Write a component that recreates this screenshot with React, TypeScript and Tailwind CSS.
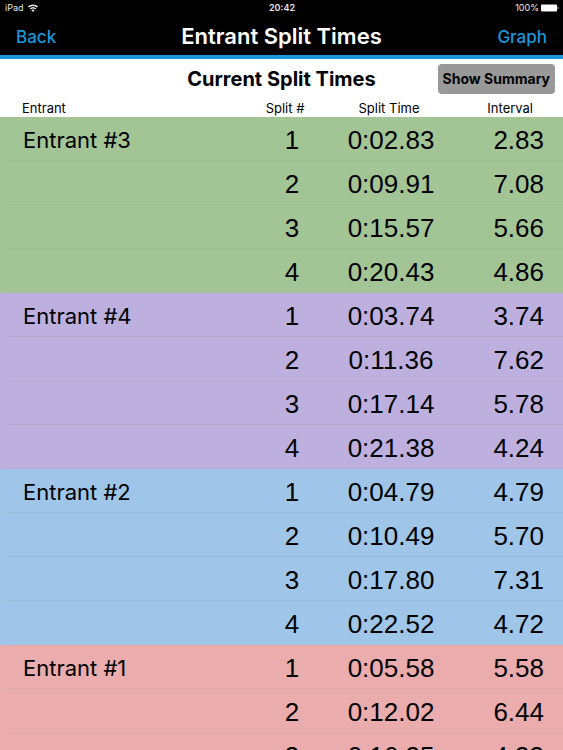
const groups = [
  {
    name: 'Entrant #3',
    color: 'bg-[#a3c495]',
    splits: [
      ['0:02.83', '2.83'],
      ['0:09.91', '7.08'],
      ['0:15.57', '5.66'],
      ['0:20.43', '4.86'],
    ],
  },
  {
    name: 'Entrant #4',
    color: 'bg-[#bdb0df]',
    splits: [
      ['0:03.74', '3.74'],
      ['0:11.36', '7.62'],
      ['0:17.14', '5.78'],
      ['0:21.38', '4.24'],
    ],
  },
  {
    name: 'Entrant #2',
    color: 'bg-[#9fc5e8]',
    splits: [
      ['0:04.79', '4.79'],
      ['0:10.49', '5.70'],
      ['0:17.80', '7.31'],
      ['0:22.52', '4.72'],
    ],
  },
  {
    name: 'Entrant #1',
    color: 'bg-[#eaacac]',
    splits: [
      ['0:05.58', '5.58'],
      ['0:12.02', '6.44'],
      ['0:16.35', '4.33'],
    ],
  },
];

const StatusBar = () => (
  <div className="grid grid-cols-3 items-center h-4 pl-[5px] pr-1 text-[9px] leading-4 text-gray-200">
    <div className="flex items-center gap-1">
      <span>iPad</span>
      <svg className="w-[10px] h-2" viewBox="0 0 20 16" fill="none">
        <path d="M1 6a13 13 0 0 1 18 0" stroke="currentColor" strokeWidth="3.2" />
        <path d="M4.5 10a8 8 0 0 1 11 0" stroke="currentColor" strokeWidth="3" />
        <path d="M10 16l-3.2-3.6a5 5 0 0 1 6.4 0z" fill="currentColor" />
      </svg>
    </div>
    <span className="text-center font-semibold">20:42</span>
    <div className="flex items-center justify-end gap-[2px]">
      <span>100%</span>
      <svg className="w-[18px] h-2" viewBox="0 0 18 8" fill="white">
        <rect x="0" y="0.5" width="16" height="7" rx="1" />
        <path d="M16.6 2.6c1 .2 1.2 2.6 0 2.8z" />
      </svg>
    </div>
  </div>
);

const App = () => {
  return (
    <div className="flex flex-col h-screen overflow-hidden bg-white text-black font-['Inter','Liberation_Sans',sans-serif]">
      <header className="bg-black border-b-4 border-[#1b96dc]">
        <StatusBar />
        <div className="grid grid-cols-[1fr_auto_1fr] items-center h-[39px] px-4">
          <button className="justify-self-start pt-1 text-[17px] font-medium text-[#1b96dc]">
            Back
          </button>
          <h1 className="text-[22px] leading-9 font-semibold text-white">
            Entrant Split Times
          </h1>
          <button className="justify-self-end pt-1 text-[17px] font-medium text-[#1b96dc]">
            Graph
          </button>
        </div>
      </header>

      <div className="grid grid-cols-[1fr_auto_1fr] items-center h-10 px-2">
        <h2 className="col-start-2 text-xl font-bold">Current Split Times</h2>
        <button className="justify-self-end h-[30px] px-[5px] rounded-sm bg-[#999999] text-sm font-bold whitespace-nowrap">
          Show Summary
        </button>
      </div>

      <div className="flex-1 overflow-hidden">
        <table className="w-full table-fixed border-separate border-spacing-0">
          <thead>
            <tr className="h-[18px] text-[13px] leading-[18px]">
              <th className="p-0 pl-[22px] text-left font-normal">Entrant</th>
              <th className="w-[74px] p-0 pr-[14px] font-normal">Split #</th>
              <th className="w-[124px] p-0 pr-1 font-normal">Split Time</th>
              <th className="w-[110px] p-0 pr-[30px] text-right font-normal">
                Interval
              </th>
            </tr>
          </thead>
          {groups.map((group) => (
            <tbody key={group.name} className={group.color}>
              {group.splits.map(([time, interval], i) => (
                <tr
                  key={time}
                  className="text-[26px] leading-[40px] font-['Liberation_Sans',Arial,sans-serif]"
                >
                  <th className="p-0 text-left font-normal">
                    <div className="h-11 ml-[7px] pt-[3px] pl-4 border-b border-[#999999]/20 text-[22px] font-['Inter',sans-serif]">
                      {i === 0 && group.name}
                    </div>
                  </th>
                  <td className="p-0 pt-[3px] border-b border-[#999999]/20 text-center">
                    {i + 1}
                  </td>
                  <td className="p-0 pt-[3px] border-b border-[#999999]/20 text-center">
                    {time}
                  </td>
                  <td className="p-0 pt-[3px] pr-[19px] border-b border-[#999999]/20 text-right">
                    {interval}
                  </td>
                </tr>
              ))}
            </tbody>
          ))}
        </table>
      </div>
    </div>
  );
};

export default App;
